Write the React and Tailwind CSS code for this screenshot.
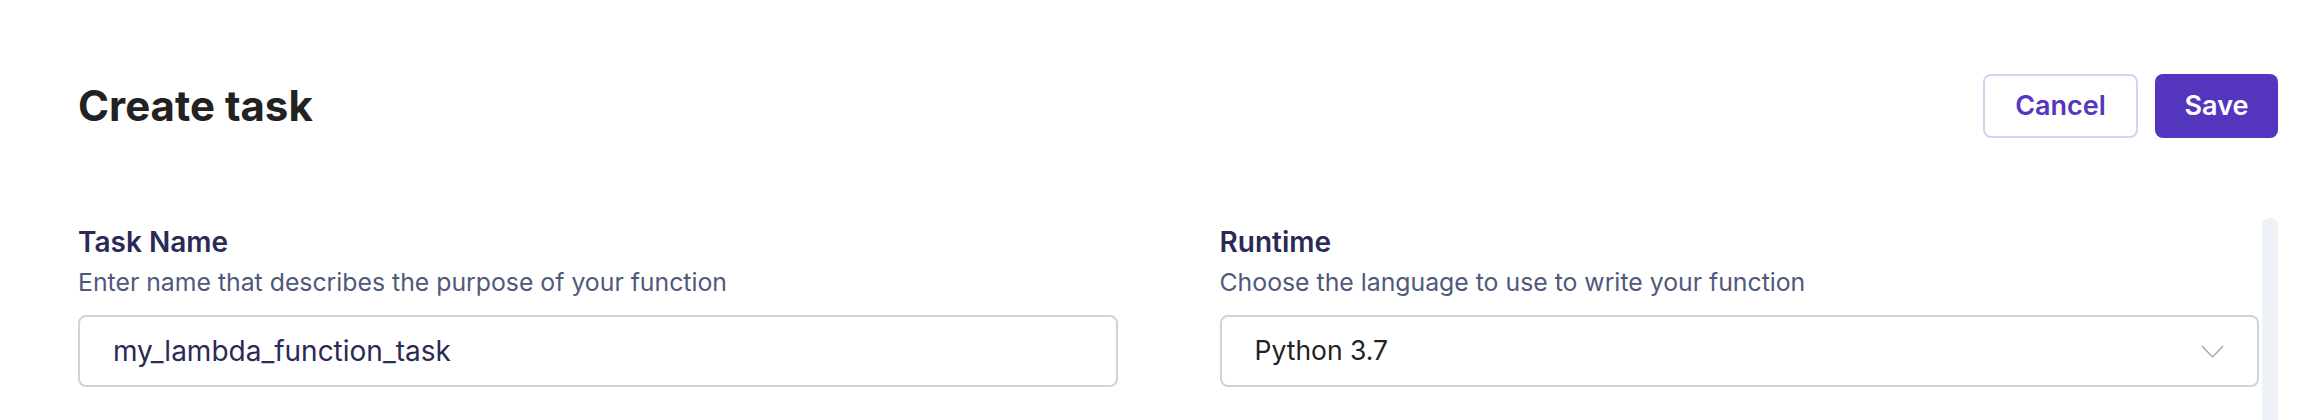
function Field({ label, hint, children }) {
    return (
        <div className="flex flex-col">
            <label className="text-[28px] leading-[34px] font-semibold text-[#2b2a55]">{label}</label>
            <p className="mt-[9px] text-[24.8px] leading-[28px] text-[#4f5a7b]">{hint}</p>
            <div className="mt-[19px]">{children}</div>
        </div>
    )
}

export default function App() {
    return (
        <div className="min-h-screen bg-white pl-[78px] pr-[24px] pt-[74px] font-['Inter',sans-serif]">
            <div className="flex items-center justify-between h-[64px]">
                <h1 className="text-[42px] leading-[50px] font-bold text-[#222222]">Create task</h1>
                <div className="flex items-center gap-[17px]">
                    <button className="h-[64px] w-[155px] rounded-[8px] border-2 border-[#d6d2f2] bg-white text-[27px] font-semibold text-[#5337be]">
                        Cancel
                    </button>
                    <button className="h-[64px] w-[123px] rounded-[8px] bg-[#5436be] text-[27px] font-semibold text-white">
                        Save
                    </button>
                </div>
            </div>

            <div className="mt-[80px] flex gap-[3px]">
                <div className="flex-1 grid grid-cols-2 gap-x-[102px] pt-[7px]">
                    <Field label="Task Name" hint="Enter name that describes the purpose of your function">
                        <input
                            type="text"
                            defaultValue="my_lambda_function_task"
                            className="w-full h-[72px] rounded-[8px] border-2 border-[#cfd3d9] px-[33px] text-[28px] text-[#2b2a55] outline-none"
                        />
                    </Field>
                    <Field label="Runtime" hint="Choose the language to use to write your function">
                        <div className="flex items-center justify-between h-[72px] rounded-[8px] border-2 border-[#cfd3d9] pl-[33px] pr-[33px]">
                            <span className="text-[26.5px] text-[#222222]">Python 3.7</span>
                            <svg width="23" height="14" viewBox="0 0 23 14" fill="none" className="mt-[2px]">
                                <polyline points="1,1 11.5,12 22,1" stroke="#a4a9b1" strokeWidth="1.5" />
                            </svg>
                        </div>
                    </Field>
                </div>
                <div className="w-[16px] h-[240px] rounded-t-full bg-[#eef1f5]" />
            </div>
        </div>
    )
}
